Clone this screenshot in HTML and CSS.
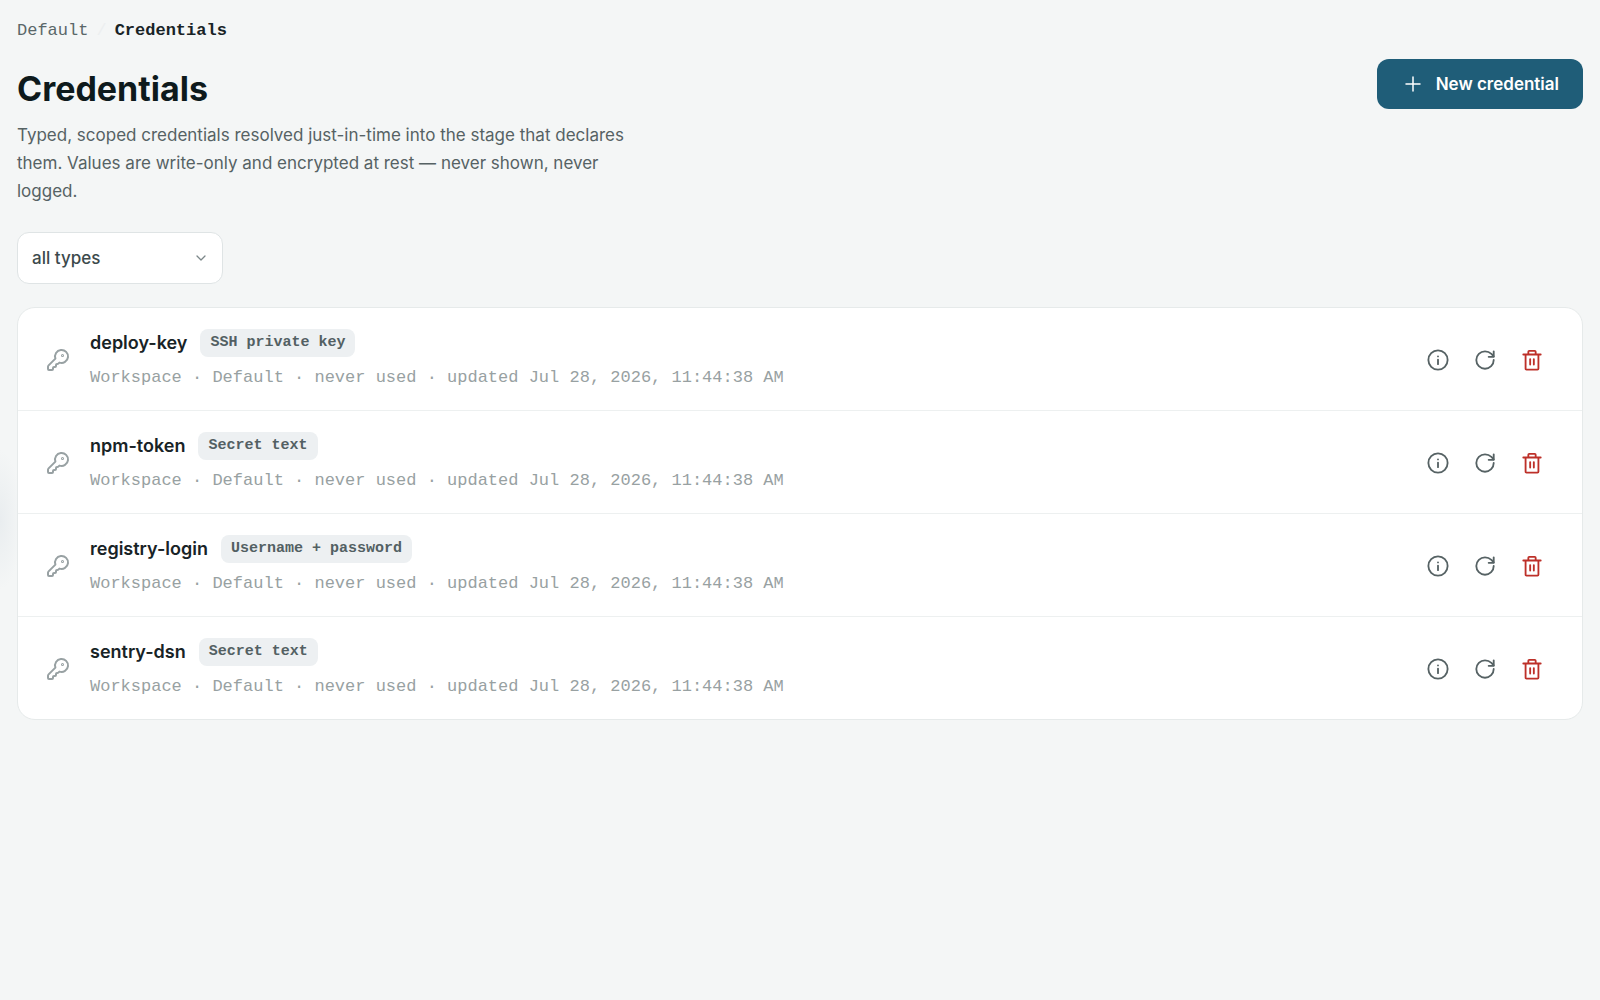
FILE: index.html
```html
<!DOCTYPE html>
<html lang="en">

<head>
  <meta charset="UTF-8">
  <meta name="viewport" content="width=device-width, initial-scale=1.0">
  <title>Credentials</title>
  <link rel="stylesheet" href="styles.css">
</head>

<body>
  <!-- Icon sprite -->
  <svg class="sprite" aria-hidden="true">
    <symbol id="icon-key" viewBox="0 0 24 24">
      <path d="M2.6 17.4A2 2 0 0 0 2 18.8V21a1 1 0 0 0 1 1h3a1 1 0 0 0 1-1v-1a1 1 0 0 1 1-1h1a1 1 0 0 0 1-1v-1a1 1 0 0 1 1-1h.2a2 2 0 0 0 1.4-.6l.8-.8a6.500 6.500 0 1 0-4-4z" />
      <circle cx="16.5" cy="7.5" r=".5" />
    </symbol>
    <symbol id="icon-info" viewBox="0 0 24 24">
      <circle cx="12" cy="12" r="10.500" />
      <path d="M12 16.5v-5M12 8v.1" />
    </symbol>
    <symbol id="icon-refresh" viewBox="0 0 24 24">
      <path d="M21.500 12a9.500 9.500 0 1 1-9.500-9.500c2.700 0 5.200 1.100 7 2.800L21.500 8" />
      <path d="M21.500 2.500V8.500h-5.500" />
    </symbol>
    <symbol id="icon-trash" viewBox="0 0 24 24">
      <path d="M2.500 6h19M5 6v15.500a1 1 0 0 0 1 1h12a1 1 0 0 0 1-1V6M8 6V3a1 1 0 0 1 1-1h6a1 1 0 0 1 1 1v3M10 11v6M14 11v6" />
    </symbol>
  </svg>

  <nav class="breadcrumb" aria-label="Breadcrumb">
    <a href="#">Default</a>
    <span class="separator">/</span>
    <span class="current">Credentials</span>
  </nav>

  <header class="page-header">
    <div class="intro">
      <h1>Credentials</h1>
      <p>Typed, scoped credentials resolved just-in-time into the stage that declares them. Values are write-only and encrypted at rest — never shown, never logged.</p>
    </div>
    <button type="button" class="new-btn">
      <svg viewBox="0 0 16 16" aria-hidden="true">
        <path d="M8 1v14M1 8h14" />
      </svg>
      New credential
    </button>
  </header>

  <div class="type-filter">
    <select id="typeFilter" aria-label="Credential type">
      <option value="">all types</option>
      <option value="ssh">SSH private key</option>
      <option value="secret">Secret text</option>
      <option value="login">Username + password</option>
    </select>
    <svg viewBox="0 0 10 6" aria-hidden="true">
      <path d="M1 1l4 4 4-4" />
    </svg>
  </div>

  <ul class="cred-list" id="credList"></ul>

  <script src="script.js"></script>
</body>

</html>
```
FILE: styles.css
```css
* {
  box-sizing: border-box;
}

body {
  margin: 0;
  padding: 18px 17px;
  min-height: 100vh;
  font-family: "Inter", sans-serif;
  font-size: 17px;
  color: #182326;
  background: radial-gradient(ellipse 22px 70px at 0 520px, #e9edef, #f4f6f6);
}

h1,
p,
ul {
  margin: 0;
  padding: 0;
}

button,
select {
  font: inherit;
}

svg {
  fill: none;
  stroke: currentColor;
  stroke-width: 2;
  stroke-linecap: round;
  stroke-linejoin: round;
}

.sprite {
  display: none;
}

.breadcrumb {
  display: flex;
  gap: 8px;
  line-height: 26px;
  font-family: "Courier New", "Liberation Mono", monospace;
  font-size: 17px;
}

.breadcrumb a {
  color: #5a6769;
  text-decoration: none;
}

.breadcrumb .separator {
  color: #eceff0;
}

.breadcrumb .current {
  font-weight: bold;
}

/* Title, description and main action */
.page-header {
  display: flex;
  justify-content: space-between;
  align-items: flex-start;
  margin-top: 15px;
}

.intro {
  max-width: 628px;
}

h1 {
  padding-top: 10px;
  font-size: 34px;
  line-height: 40px;
  color: #0e1a1c;
}

.intro p {
  margin-top: 12px;
  line-height: 28px;
  color: #566264;
}

.new-btn {
  display: flex;
  align-items: center;
  gap: 15px;
  height: 50px;
  padding: 0 24px 0 28px;
  border: none;
  border-radius: 12px;
  background: #1f5d78;
  color: #fff;
  font-weight: 600;
  white-space: nowrap;
  cursor: pointer;
}

.new-btn svg {
  width: 16px;
  height: 16px;
  stroke-width: 1.5;
}

.type-filter {
  display: grid;
  align-items: center;
  width: 206px;
  margin-top: 27px;
}

.type-filter select,
.type-filter svg {
  grid-area: 1 / 1;
}

.type-filter select {
  appearance: none;
  width: 100%;
  height: 52px;
  padding: 0 14px;
  border: 1px solid #dfe4e5;
  border-radius: 12px;
  background: #fff;
  color: #3c4a4c;
  font-weight: 500;
}

.type-filter svg {
  justify-self: end;
  width: 10px;
  height: 6px;
  margin-right: 17px;
  color: #7c8789;
  stroke-width: 1.3;
  pointer-events: none;
}

/* Credential rows */
.cred-list {
  margin-top: 23px;
  border: 1px solid #e6eaea;
  border-radius: 18px;
  background: #fff;
  list-style: none;
}

.cred-row {
  display: flex;
  align-items: center;
  gap: 20px;
  padding: 21px 39px 20px 28px;
}

.cred-row + .cred-row {
  border-top: 1px solid #edf0f0;
}

.key-icon {
  width: 24px;
  height: 24px;
  color: #98a1a3;
}

.cred-info {
  flex: 1;
}

.cred-title {
  display: flex;
  align-items: center;
  gap: 13px;
}

.cred-name {
  font-size: 18px;
  font-weight: 600;
  line-height: 28px;
}

.badge {
  padding: 0 10px;
  border-radius: 8px;
  background: #edf0f2;
  color: #536063;
  font-family: "Courier New", "Liberation Mono", monospace;
  font-size: 15px;
  font-weight: bold;
  line-height: 28px;
}

.cred-meta {
  margin-top: 9px;
  color: #98a1a2;
  font-family: "Courier New", "Liberation Mono", monospace;
  font-size: 17px;
  line-height: 24px;
}

.cred-actions {
  display: flex;
  gap: 25px;
}

.cred-actions button {
  display: flex;
  padding: 0;
  border: none;
  background: none;
  color: #566264;
  cursor: pointer;
}

.cred-actions svg {
  width: 22px;
  height: 22px;
}

.cred-actions .delete {
  color: #bd3029;
}
```
FILE: script.js
```js
const credentials = [
  { name: 'deploy-key', type: 'SSH private key' },
  { name: 'npm-token', type: 'Secret text' },
  { name: 'registry-login', type: 'Username + password' },
  { name: 'sentry-dsn', type: 'Secret text' }
];

const credList = document.getElementById('credList');
const typeFilter = document.getElementById('typeFilter');

// Render the rows, limited to the selected type
function renderCredentials() {
  const selected = typeFilter.value ? typeFilter.selectedOptions[0].textContent : '';
  credList.innerHTML = '';
  credentials.filter(cred => !selected || cred.type === selected).forEach(cred => {
    const row = document.createElement('li');
    row.className = 'cred-row';
    row.innerHTML = `
      <svg class="key-icon" aria-hidden="true"><use href="#icon-key" /></svg>
      <div class="cred-info">
        <div class="cred-title">
          <span class="cred-name">${cred.name}</span>
          <span class="badge">${cred.type}</span>
        </div>
        <div class="cred-meta">Workspace · Default · never used · updated Jul 28, 2026, 11:44:38 AM</div>
      </div>
      <div class="cred-actions">
        <button type="button" aria-label="Details of ${cred.name}"><svg><use href="#icon-info" /></svg></button>
        <button type="button" aria-label="Rotate ${cred.name}"><svg><use href="#icon-refresh" /></svg></button>
        <button type="button" class="delete" aria-label="Delete ${cred.name}"><svg><use href="#icon-trash" /></svg></button>
      </div>
    `;
    credList.appendChild(row);
  });
}

typeFilter.addEventListener('change', renderCredentials);

renderCredentials();
```
